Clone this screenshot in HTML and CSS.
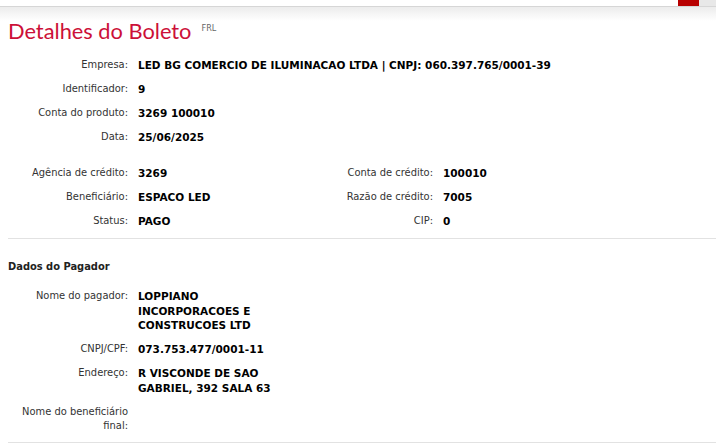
FILE: index.html
```html
<!DOCTYPE html>
<html lang="pt-BR">
<head>
<meta charset="utf-8">
<link rel="stylesheet" href="styles.css">
</head>
<body>
<div class="topbar">
  <div class="topbar-fill"></div>
  <div class="topbar-red"></div>
  <div class="topbar-gray"></div>
</div>
<div class="shade"></div>
<main class="page">
  <h1 class="title">Detalhes do Boleto <span class="tag">FRL</span></h1>

  <dl class="fields">
    <div class="row"><dt>Empresa:</dt><dd>LED BG COMERCIO DE ILUMINACAO LTDA | CNPJ: 060.397.765/0001-39</dd></div>
    <div class="row"><dt>Identificador:</dt><dd>9</dd></div>
    <div class="row"><dt>Conta do produto:</dt><dd>3269 100010</dd></div>
    <div class="row"><dt>Data:</dt><dd>25/06/2025</dd></div>
  </dl>

  <div class="grid2">
    <div class="row"><dt>Agência de crédito:</dt><dd>3269</dd></div>
    <div class="row"><dt>Conta de crédito:</dt><dd>100010</dd></div>
    <div class="row"><dt>Beneficiário:</dt><dd>ESPACO LED</dd></div>
    <div class="row"><dt>Razão de crédito:</dt><dd>7005</dd></div>
    <div class="row"><dt>Status:</dt><dd>PAGO</dd></div>
    <div class="row"><dt>CIP:</dt><dd>0</dd></div>
  </div>

  <hr class="divider">

  <h2 class="section">Dados do Pagador</h2>

  <dl class="fields payer">
    <div class="row"><dt>Nome do pagador:</dt><dd class="wrap">LOPPIANO INCORPORACOES E CONSTRUCOES LTD</dd></div>
    <div class="row"><dt>CNPJ/CPF:</dt><dd>073.753.477/0001-11</dd></div>
    <div class="row"><dt>Endereço:</dt><dd class="wrap">R VISCONDE DE SAO GABRIEL, 392 SALA 63</dd></div>
    <div class="row last"><dt>Nome do beneficiário final:</dt><dd></dd></div>
  </dl>

  <hr class="divider">
</main>
</body>
</html>
```
FILE: styles.css
```css
* { box-sizing: border-box; }
html, body { margin: 0; padding: 0; background: #fff; }
body {
  font-family: "DejaVu Sans Condensed", "DejaVu Sans", sans-serif;
  font-size: 11px;
  color: #333;
  overflow: hidden;
}
.topbar {
  display: flex;
  height: 7px;
  border-bottom: 1px solid #d6d6d6;
}
.topbar-fill { flex: 1; background: #fff; }
.topbar-red { width: 21px; background: #b80000; }
.topbar-gray { width: 17px; background: #e8e8e8; }
.shade {
  height: 14px;
  background: linear-gradient(#ececec, #fff);
}
.page { padding-left: 8px; }
.title {
  margin: 0;
  font-family: "Lato", "Open Sans", sans-serif;
  font-weight: 400;
  font-size: 21.8px;
  line-height: 20px;
  color: #cc1038;
  display: flex;
  align-items: flex-start;
  gap: 10px;
}
.tag {
  font-family: "DejaVu Sans Condensed", sans-serif;
  font-size: 9px;
  color: #666;
  line-height: 10px;
  margin-top: 2px;
}
.fields { margin: 17px 0 0; }
.row {
  display: flex;
  gap: 10px;
  min-height: 24px;
}
dt {
  width: 120px;
  flex: none;
  text-align: right;
  line-height: 14.5px;
}
dd {
  margin: 0;
  font-family: "DejaVu Sans", sans-serif;
  font-size: 10.5px;
  font-weight: bold;
  color: #000;
  line-height: 14.5px;
}
.grid2 {
  margin-top: 12px;
  display: grid;
  grid-template-columns: 305px 1fr;
}
.divider {
  border: 0;
  border-top: 1px solid #e2e2e2;
  margin: 0;
}
.section {
  margin: 21px 0 0;
  font-size: 11px;
  font-weight: bold;
  color: #222;
  line-height: 14px;
}
.payer { margin-top: 15px; }
.payer .row { min-height: 24px; padding-bottom: 9.5px; }
.payer .row.last { padding-bottom: 8px; }
.wrap { width: 140px; }
```
